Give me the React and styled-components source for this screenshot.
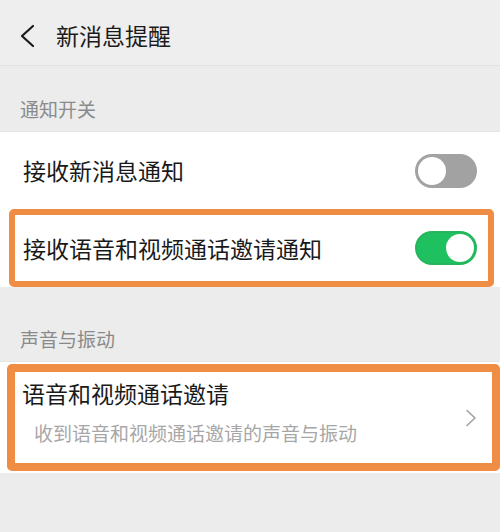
import React, { useState } from "react";
import styled, { createGlobalStyle } from "styled-components";

const GlobalStyle = createGlobalStyle`
  html, body {
    margin: 0;
    padding: 0;
    background: #ededed;
    font-family: "Noto Sans CJK SC", "Noto Sans", sans-serif;
  }
`;

const Page = styled.div`
  width: 500px;
  height: 532px;
  background: #ececec;
  overflow: hidden;
`;

const Header = styled.div`
  height: 66px;
  display: flex;
  align-items: center;
  padding-left: 19px;
  background: #eeeeee;
  border-bottom: 1px solid #e2e2e2;
  box-sizing: border-box;
`;

const BackButton = styled.svg`
  width: 18px;
  height: 24px;
  margin-right: 19px;
  margin-top: 6px;
`;

const Title = styled.div`
  font-size: 23px;
  line-height: 1;
  color: #1b1b1b;
  margin-top: 6px;
`;

const SectionLabel = styled.div`
  height: ${(p) => p.$height}px;
  display: flex;
  align-items: flex-end;
  padding: 0 0 12px 20px;
  box-sizing: border-box;
  font-size: 19px;
  line-height: 20px;
  color: #8a8a8a;
`;

const Group = styled.div`
  background: #ffffff;
  border-top: 1px solid #e4e4e4;
  padding-bottom: ${(p) => p.$bottom || 0}px;
`;

const Row = styled.div`
  display: flex;
  align-items: center;
  justify-content: space-between;
  height: ${(p) => p.$height || 77}px;
  padding: 0 ${(p) => p.$right || 23}px 0 ${(p) => p.$left || 23}px;
  box-sizing: border-box;
  background: #ffffff;
`;

const Highlight = styled.div`
  border: ${(p) => p.$width}px solid #ef8d45;
  border-radius: 5px;
  margin: ${(p) => p.$margin};
  overflow: hidden;
`;

const Label = styled.div`
  font-size: 23px;
  line-height: 1;
  color: #1a1a1a;
`;

const Stack = styled.div`
  display: flex;
  flex-direction: column;
  align-self: flex-start;
  margin-top: 10px;
`;

const SubLabel = styled.div`
  font-size: 19px;
  line-height: 1;
  color: #a7a7a7;
  margin: 18px 0 0 12px;
`;

const Track = styled.button`
  width: 62px;
  height: 34px;
  border-radius: 17px;
  border: 2px solid ${(p) => (p.$on ? "#25b55d" : "#a2a2a2")};
  background: ${(p) => (p.$on ? "#1fc060" : "#a2a2a2")};
  padding: 0;
  display: flex;
  align-items: center;
  justify-content: ${(p) => (p.$on ? "flex-end" : "flex-start")};
  box-sizing: border-box;
  cursor: pointer;
`;

const Knob = styled.span`
  width: 28px;
  height: 28px;
  border-radius: 50%;
  background: #ffffff;
  margin: 0 1px;
`;

const Chevron = styled.svg`
  width: 12px;
  height: 18px;
`;

const Toggle = ({ initial }) => {
  const [on, setOn] = useState(initial);
  return (
    <Track $on={on} onClick={() => setOn((s) => !s)}>
      <Knob />
    </Track>
  );
};

export default function App() {
  return (
    <Page>
      <GlobalStyle />
      <Header>
        <BackButton viewBox="0 0 18 24" fill="none" stroke="#1b1b1b" strokeWidth="2.2" strokeLinecap="round" strokeLinejoin="round">
          <path d="M14 2 L3 12 L14 22" />
        </BackButton>
        <Title>新消息提醒</Title>
      </Header>

      <SectionLabel $height={65}>通知开关</SectionLabel>
      <Group>
        <Row $height={77}>
          <Label>接收新消息通知</Label>
          <Toggle initial={false} />
        </Row>
        <Highlight $width={6} $margin="0 6px 1px 9px">
          <Row $height={66} $left={8} $right={11}>
            <Label>接收语音和视频通话邀请通知</Label>
            <Toggle initial={true} />
          </Row>
        </Highlight>
      </Group>

      <SectionLabel $height={73}>声音与振动</SectionLabel>
      <Group $bottom={2}>
        <Highlight $width={8} $margin="2px 0 0 7px">
          <Row $height={91} $left={7} $right={15}>
            <Stack>
              <Label>语音和视频通话邀请</Label>
              <SubLabel>收到语音和视频通话邀请的声音与振动</SubLabel>
            </Stack>
            <Chevron viewBox="0 0 12 18" fill="none" stroke="#a0a0a0" strokeWidth="1.6" strokeLinecap="round" strokeLinejoin="round">
              <path d="M2 1.5 L10 9 L2 16.5" />
            </Chevron>
          </Row>
        </Highlight>
      </Group>
    </Page>
  );
}
